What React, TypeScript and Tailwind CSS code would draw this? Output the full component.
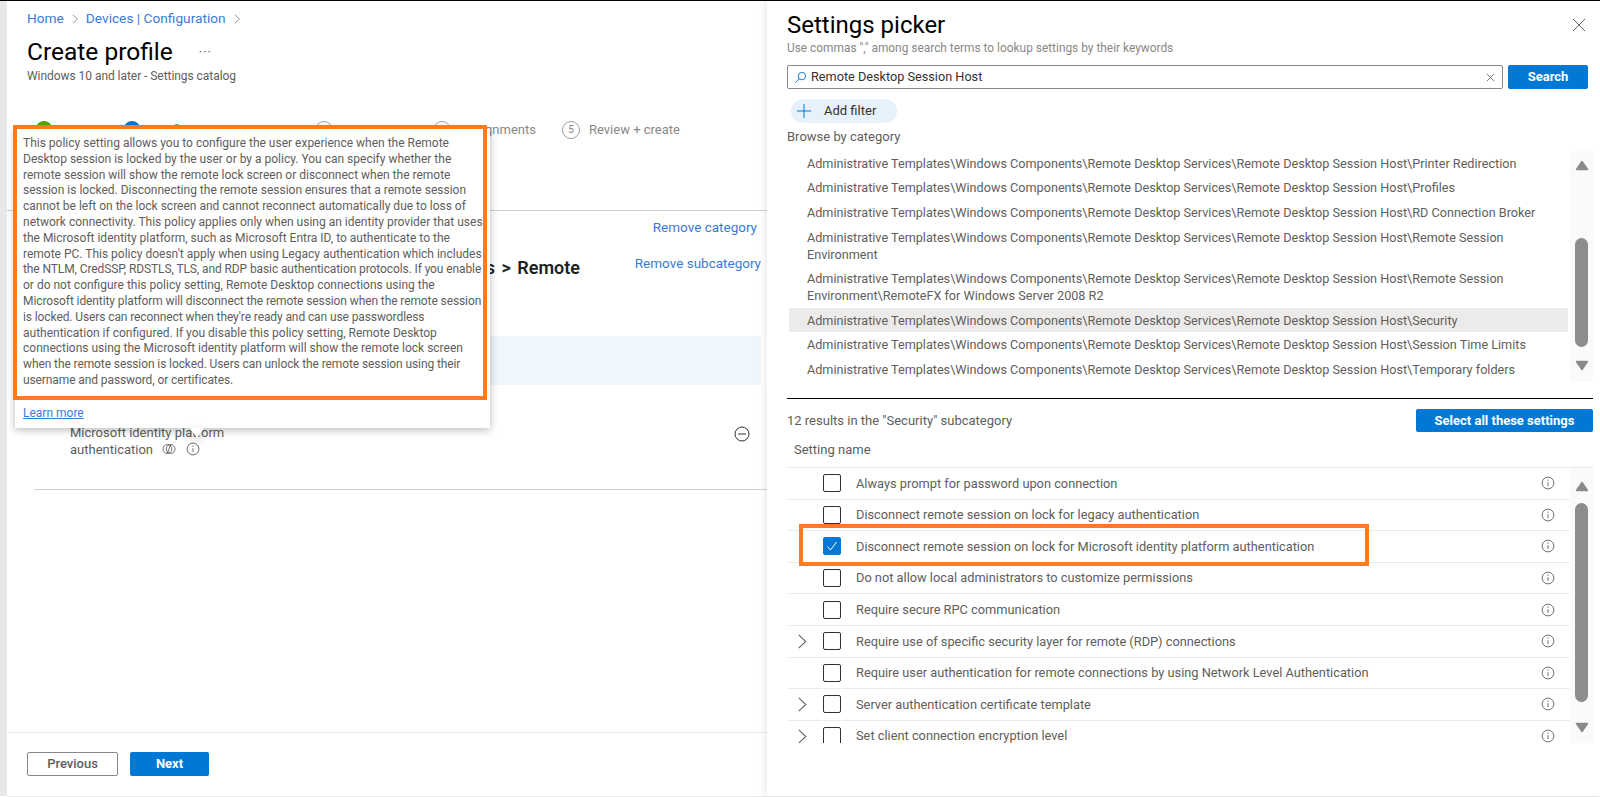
const popoverLines = [
  "This policy setting allows you to configure the user experience when the Remote",
  "Desktop session is locked by the user or by a policy. You can specify whether the",
  "remote session will show the remote lock screen or disconnect when the remote",
  "session is locked. Disconnecting the remote session ensures that a remote session",
  "cannot be left on the lock screen and cannot reconnect automatically due to loss of",
  "network connectivity. This policy applies only when using an identity provider that uses",
  "the Microsoft identity platform, such as Microsoft Entra ID, to authenticate to the",
  "remote PC. This policy doesn't apply when using Legacy authentication which includes",
  "the NTLM, CredSSP, RDSTLS, TLS, and RDP basic authentication protocols. If you enable",
  "or do not configure this policy setting, Remote Desktop connections using the",
  "Microsoft identity platform will disconnect the remote session when the remote session",
  "is locked. Users can reconnect when they're ready and can use passwordless",
  "authentication if configured. If you disable this policy setting, Remote Desktop",
  "connections using the Microsoft identity platform will show the remote lock screen",
  "when the remote session is locked. Users can unlock the remote session using their",
  "username and password, or certificates.",
];
// these lines run a bit long in this font
const tightLines = [8, 10, 11, 14, 15];

const P = "Administrative Templates\\Windows Components\\Remote Desktop Services\\Remote Desktop Session Host\\";

const categories = [
  { lines: [P + "Printer Redirection"] },
  { lines: [P + "Profiles"] },
  { lines: [P + "RD Connection Broker"] },
  { lines: [P + "Remote Session", "Environment"] },
  { lines: [P + "Remote Session", "Environment\\RemoteFX for Windows Server 2008 R2"] },
  { lines: [P + "Security"], active: true },
  { lines: [P + "Session Time Limits"] },
  { lines: [P + "Temporary folders"] },
];

const settings = [
  { name: "Always prompt for password upon connection" },
  { name: "Disconnect remote session on lock for legacy authentication" },
  { name: "Disconnect remote session on lock for Microsoft identity platform authentication", checked: true },
  { name: "Do not allow local administrators to customize permissions" },
  { name: "Require secure RPC communication" },
  { name: "Require use of specific security layer for remote (RDP) connections", expand: true },
  { name: "Require user authentication for remote connections by using Network Level Authentication" },
  { name: "Server authentication certificate template", expand: true },
  { name: "Set client connection encryption level", expand: true },
];

function InfoIcon({ className = "" }: { className?: string }) {
  return (
    <svg viewBox="0 0 14 14" className={`h-[14px] w-[14px] ${className}`} fill="none" stroke="#605e5c" strokeWidth="0.9">
      <circle cx="7" cy="7" r="5.9" />
      <path d="M7 6.2v3.9" />
      <circle cx="7" cy="4.2" r="0.6" fill="#605e5c" stroke="none" />
    </svg>
  );
}

function Chevron({ className = "" }: { className?: string }) {
  return (
    <svg viewBox="0 0 10 16" className={className} fill="none" stroke="#605e5c" strokeWidth="1.1">
      <path d="M1.5 1l7.5 7-7.5 7" />
    </svg>
  );
}

function Triangle({ down = false }: { down?: boolean }) {
  return (
    <svg viewBox="0 0 14 11" className="h-[11px] w-[14px] shrink-0" fill="#8a8a8a" stroke="#8a8a8a" strokeWidth="1.5" strokeLinejoin="round">
      <path d={down ? "M1.5 1.5h11L7 9.5z" : "M1.5 9.5h11L7 1.5z"} />
    </svg>
  );
}

function Step({ n, label, width, state }: { n: string; label: string; width: string; state: "done" | "current" | "todo" }) {
  const circle =
    state === "done"
      ? "bg-[#57a300] border-[#57a300] text-white"
      : state === "current"
        ? "bg-[#0078d4] border-[#0078d4] text-white"
        : "border-[#a19f9d] text-[#8a8886]";
  return (
    <div className={`flex shrink-0 items-center gap-[9px] ${width}`}>
      <span className={`flex h-[18px] w-[18px] shrink-0 items-center justify-center rounded-full border text-[10px] ${circle}`}>{n}</span>
      <span className="whitespace-nowrap text-[13px] text-[#8a8886]">{label}</span>
    </div>
  );
}

export default function App() {
  return (
    <div className="relative flex h-[797px] w-[1600px] flex-col overflow-hidden border-t border-black bg-white font-['Roboto',sans-serif] text-[#605e5c]">
      <div className="flex h-[795px]">
        <div className="w-[7px] shrink-0 bg-[#e8e8e8]" />

        <div className="relative flex w-[760px] shrink-0 flex-col">
          <div className="flex h-[35px] items-center pl-[20px] text-[13.7px] text-[#3a7bd5]">
            <span>Home</span>
            <Chevron className="mx-[8px] h-[10px] w-[6px]" />
            <span>Devices | Configuration</span>
            <Chevron className="ml-[8px] h-[10px] w-[6px]" />
          </div>
          <div className="flex h-[32px] items-center pl-[20px]">
            <h1 className="text-[24.5px] font-normal text-black">Create profile</h1>
            <span className="ml-[26px] text-[13px] tracking-[1px] text-[#605e5c]">···</span>
          </div>
          <div className="h-[16px] pl-[20px] text-[12px] leading-[16px] tracking-[-0.05px]">Windows 10 and later - Settings catalog</div>

          <div className="mt-[36px] flex pl-[28px]">
            <Step n="✓" label="Basics" width="w-[88px]" state="done" />
            <Step n="2" label="Configuration settings" width="w-[192px]" state="current" />
            <Step n="3" label="Scope tags" width="w-[118px]" state="todo" />
            <Step n="4" label="Assignments" width="w-[129px]" state="todo" />
            <Step n="5" label="Review + create" width="w-[130px]" state="todo" />
          </div>

          <div className="mt-[70px] h-px bg-[#d2d0ce]" />

          <div className="mt-[8px] flex h-[18px] items-center justify-end pr-[10px] text-[13.5px] text-[#3a7bd5]">Remove category</div>

          <div className="mt-[19px] flex h-[24px] items-center pl-[27px] pr-[6px]">
            <div className="flex w-[546px] justify-end overflow-hidden whitespace-nowrap text-[18px] font-semibold text-[#201f1e] [word-spacing:2px]">
              s &gt; Remote
            </div>
            <span className="mb-[8px] ml-auto text-[13.5px] text-[#3a7bd5]">Remove subcategory</span>
          </div>

          <div className="ml-[27px] mr-[6px] mt-[56px] h-[49px] bg-[#eff6fc]" />

          <div className="ml-[63px] mr-[17px] mt-[39px] flex items-start justify-between">
            <div className="text-[13px] leading-[17px]">
              <div>Microsoft identity platform</div>
              <div className="flex items-center">
                authentication
                <svg viewBox="0 0 14 14" className="ml-[9px] h-[14px] w-[14px]" fill="none" stroke="#605e5c" strokeWidth="0.9">
                  <circle cx="5.4" cy="7" r="4.4" />
                  <circle cx="8.6" cy="7" r="4.4" />
                  <path d="M5 12l4-10" />
                </svg>
                <InfoIcon className="ml-[10px] h-[13px] w-[13px]" />
              </div>
            </div>
            <svg viewBox="0 0 16 16" className="mt-[2px] h-[16px] w-[16px]" fill="none" stroke="#323130" strokeWidth="1">
              <circle cx="8" cy="8" r="7" />
              <path d="M4 8h8" />
            </svg>
          </div>

          <div className="ml-[27px] mt-[31px] h-px bg-[#d2d0ce]" />

          <div className="mt-auto h-px bg-[#edebe9]" />
          <div className="flex h-[63px] gap-[12px] pl-[20px] pt-[19px]">
            <button className="h-[24px] w-[91px] rounded-[2px] border border-[#8a8886] bg-white text-[13px] font-medium text-[#605e5c]">Previous</button>
            <button className="h-[24px] w-[79px] rounded-[2px] bg-[#0078d4] text-[13px] font-bold text-white">Next</button>
          </div>
        </div>

        <div className="relative z-10 flex flex-1 flex-col pl-[20px] pr-[7px] pt-[8px] shadow-[-3px_0_6px_rgba(0,0,0,0.07)]">
          <div className="flex h-[32px] items-center justify-between">
            <h2 className="text-[24px] font-normal text-black">Settings picker</h2>
            <svg viewBox="0 0 14 14" className="mr-[7px] h-[14px] w-[14px]" fill="none" stroke="#605e5c" strokeWidth="1">
              <path d="M1 1l12 12M13 1L1 13" />
            </svg>
          </div>
          <div className="-mt-px h-[16px] text-[11.9px] leading-[16px] text-[#8a8886]">Use commas "," among search terms to lookup settings by their keywords</div>

          <div className="mt-[9px] flex h-[24px] gap-[5px] pr-[5px]">
            <div className="flex w-[716px] items-center rounded-[2px] border border-[#8a8886] pl-[6px] pr-[7px] text-[12.7px] text-[#323130]">
              <svg viewBox="0 0 14 14" className="h-[13px] w-[13px]" fill="none" stroke="#0078d4" strokeWidth="1">
                <circle cx="8.5" cy="5.5" r="4" />
                <path d="M5.5 8.5L1.5 12.5" />
              </svg>
              <span className="ml-[4px]">Remote Desktop Session Host</span>
              <svg viewBox="0 0 10 10" className="ml-auto h-[9px] w-[9px]" fill="none" stroke="#605e5c" strokeWidth="0.9">
                <path d="M1 1l8 8M9 1L1 9" />
              </svg>
            </div>
            <button className="w-[80px] rounded-[2px] bg-[#0078d4] text-[13px] font-bold text-white">Search</button>
          </div>

          <div className="ml-[4px] mt-[10px] flex h-[24px] w-[106px] items-center rounded-full bg-[#e6f1fb] pl-[6px] text-[13px] text-[#323130]">
            <svg viewBox="0 0 14 14" className="h-[14px] w-[14px]" fill="none" stroke="#0078d4" strokeWidth="1">
              <path d="M7 0v14M0 7h14" />
            </svg>
            <span className="ml-[13px]">Add filter</span>
          </div>

          <div className="mt-[6px] h-[16px] text-[13px] leading-[16px]">Browse by category</div>

          <div className="mt-[6px] flex h-[231px]">
            <div className="w-[783px] shrink-0 pl-[2px] pr-[2px] text-[12.65px] leading-[17px]">
              {categories.map((c, i) => (
                <div
                  key={i}
                  className={`flex flex-col justify-center pl-[18px] ${c.lines.length > 1 ? "h-[41.5px]" : "h-[24.6px]"} ${c.active ? "bg-[#edebe9]" : ""}`}
                >
                  {c.lines.map((l) => (
                    <div key={l} className="whitespace-nowrap">{l}</div>
                  ))}
                </div>
              ))}
            </div>
            <div className="flex w-[23px] flex-col items-center bg-[#fafafa] pt-[9px]">
              <Triangle />
              <div className="mt-[67px] h-[109px] w-[13px] shrink-0 rounded-full bg-[#8d8d8d]" />
              <div className="mt-[13px]">
                <Triangle down />
              </div>
            </div>
          </div>

          <div className="mt-[16px] h-px bg-black" />

          <div className="mt-[10px] flex h-[23px] items-center justify-between">
            <span className="text-[13px]">12 results in the "Security" subcategory</span>
            <button className="h-[23px] w-[177px] rounded-[2px] bg-[#0078d4] text-[13px] font-bold text-white">Select all these settings</button>
          </div>

          <div className="mt-[10px] h-[16px] pl-[7px] text-[13px] leading-[16px]">Setting name</div>

          <div className="mt-[9px] h-px bg-[#edebe9]" />

          <div className="relative flex h-[275px] overflow-hidden">
            <div className="w-[783px] shrink-0">
              {settings.map((s) => (
                <div key={s.name} className="flex h-[31.6px] shrink-0 items-center border-b border-[#edebe9] text-[12.8px]">
                  <div className="flex w-[36px] shrink-0 justify-center pr-[6px]">
                    {s.expand && <Chevron className="h-[15px] w-[10px]" />}
                  </div>
                  {s.checked ? (
                    <span className="flex h-[18px] w-[18px] shrink-0 items-center justify-center rounded-[2px] bg-[#0078d4]">
                      <svg viewBox="0 0 12 12" className="h-[12px] w-[12px]" fill="none" stroke="white" strokeWidth="1">
                        <path d="M1.5 6.5L4.5 10l6-8" />
                      </svg>
                    </span>
                  ) : (
                    <span className="h-[18px] w-[18px] shrink-0 rounded-[2px] border border-[#323130]" />
                  )}
                  <span className="ml-[15px] whitespace-nowrap">{s.name}</span>
                  <InfoIcon className="ml-auto mr-[15px]" />
                </div>
              ))}
            </div>
            <div className="flex w-[23px] flex-col items-center bg-[#fafafa] pt-[13px]">
              <Triangle />
              <div className="mt-[11px] h-[199px] w-[13px] shrink-0 rounded-full bg-[#8d8d8d]" />
              <div className="mt-[20px]">
                <Triangle down />
              </div>
            </div>
            <div className="absolute left-[12px] top-[56px] h-[42px] w-[570px] border-[4px] border-[#fd7a1e]" />
          </div>
        </div>
      </div>
      <div className="ml-[7px] mt-auto h-px bg-[#edebe9]" />

      {/* description callout over the left page */}
      <div className="absolute left-[15px] top-[128px] z-20 h-[299px] w-[475px] bg-white shadow-[0_2px_8px_rgba(0,0,0,0.28)]">
        <div className="absolute -left-[2px] -top-[4px] h-[275px] w-[474px] border-[4px] border-[#fd7a1e] pl-[6px] pt-[7px] text-[12px] leading-[15.8px] text-[#605e5c]">
          {popoverLines.map((l, i) => (
            <div key={l} className={tightLines.includes(i) ? "whitespace-nowrap tracking-[-0.1px]" : "whitespace-nowrap"}>{l}</div>
          ))}
        </div>
        <a className="absolute left-[8px] top-[276px] text-[12px] leading-[16px] text-[#3a7bd5] underline">Learn more</a>
        <div className="absolute left-[175px] top-[299px] h-0 w-0 border-l-[7px] border-r-[7px] border-t-[10px] border-l-transparent border-r-transparent border-t-white drop-shadow-[0_3px_4px_rgba(0,0,0,0.25)]" />
      </div>
    </div>
  );
}
